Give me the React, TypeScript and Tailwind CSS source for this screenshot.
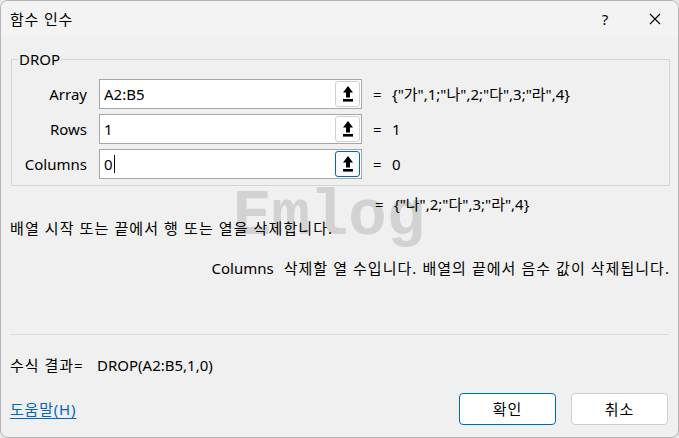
import React from "react";

const FONT = '"Noto Sans", "Noto Sans CJK KR", sans-serif';

function RefIcon() {
  return (
    <svg width="12" height="18" viewBox="0 0 12 18" aria-hidden="true">
      <polygon points="6,1 11,7.5 8,7.5 8,12.5 4,12.5 4,7.5 1,7.5" fill="#000" />
      <rect x="1" y="14" width="10" height="2.6" fill="#000" />
    </svg>
  );
}

type ArgRowProps = {
  label: string;
  value: string;
  result: string;
  focused?: boolean;
};

function ArgRow({ label, value, result, focused }: ArgRowProps) {
  return (
    <div className="flex h-[30px] items-center">
      <div className="w-[76px] text-right text-[15px] leading-[20px]">{label}</div>
      <div className="ml-[12px] flex h-[30px] w-[263px] items-center border border-[#a6a6a6] bg-white pl-[4px] pr-[1px]">
        <div className="flex flex-1 items-center text-[15px] leading-[20px]">
          {value}
          {focused && <span className="ml-[1px] inline-block h-[18px] w-[1px] bg-black" />}
        </div>
        <div
          className={
            focused
              ? "flex h-[26px] w-[25px] items-center justify-center rounded-[3px] border border-[#0067c0] bg-[#f7fbff]"
              : "flex h-[26px] w-[25px] items-center justify-center rounded-[3px] border border-[#d0d0d0] bg-white"
          }
        >
          <RefIcon />
        </div>
      </div>
      <div className="ml-[11px] w-[19px] text-[15px] leading-[20px]">=</div>
      <div className="text-[15px] leading-[20px]">{result}</div>
    </div>
  );
}

export default function App() {
  return (
    <div className="h-[438px] w-[679px] bg-[#e6e6e6]" style={{ fontFamily: FONT }}>
      <div className="relative isolate flex h-[438px] w-[679px] flex-col overflow-hidden rounded-[8px] border border-[#b4b4b4] bg-[#f0f0f0] text-[#000]">
        {/* watermark behind the dialog contents */}
        <div
          className="pointer-events-none absolute left-[232px] top-[178px] -z-10 text-[64px] font-bold leading-[76px] text-[#d2d2d2]"
          style={{ fontFamily: '"Liberation Mono", monospace' }}
        >
          Emlog
        </div>

        {/* title bar */}
        <div className="flex h-[36px] items-center bg-[#f3f3f3] pl-[9px]">
          <div className="flex-1 text-[15px] leading-[20px] tracking-[0.8px]">함수 인수</div>
          <div className="w-[30px] text-center text-[15px] leading-[20px]">?</div>
          <div className="ml-[28px] mr-[16px] flex h-[20px] w-[14px] items-center justify-center">
            <svg width="12" height="12" viewBox="0 0 12 12" aria-hidden="true">
              <path d="M1 1 L11 11 M11 1 L1 11" stroke="#000" strokeWidth="1.1" fill="none" />
            </svg>
          </div>
        </div>

        {/* argument group */}
        <fieldset className="mx-[10px] mt-[12px] w-[659px] border border-[#d6d6d6] px-[6px] pb-[6px] pt-[10px]">
          <legend className="px-[1px] text-[15px] leading-[20px]">DROP</legend>
          <div className="-ml-[7px] flex flex-col gap-[5px]">
            <ArgRow label="Array" value="A2:B5" result={'{"가",1;"나",2;"다",3;"라",4}'} />
            <ArgRow label="Rows" value="1" result="1" />
            <ArgRow label="Columns" value="0" result="0" focused />
          </div>
        </fieldset>

        {/* overall result */}
        <div className="mt-[8px] flex h-[20px] items-center pl-[374px] text-[15px] leading-[20px]">
          <span className="w-[19px]">=</span>
          <span>{'{"나",2;"다",3;"라",4}'}</span>
        </div>

        <div className="mt-[4px] pl-[9px] text-[15px] leading-[20px] tracking-[1.1px]">
          배열 시작 또는 끝에서 행 또는 열을 삭제합니다.
        </div>

        <div className="mt-[20px] flex justify-end pr-[8px] text-[15px] leading-[20px]">
          <span className="mr-[10px]">Columns</span>
          <span className="tracking-[1.05px]">삭제할 열 수입니다. 배열의 끝에서 음수 값이 삭제됩니다.</span>
        </div>

        <div className="mx-[9px] mt-[56px] h-px bg-[#dcdcdc]" />

        <div className="mt-[20px] flex h-[20px] items-center pl-[9px] text-[15px] leading-[20px]">
          <span className="w-[87px] tracking-[1px]">수식 결과=</span>
          <span>DROP(A2:B5,1,0)</span>
        </div>

        {/* footer */}
        <div className="mt-[18px] flex h-[32px] items-center pl-[9px] pr-[10px]">
          <span className="flex-1 text-[15px] leading-[20px] tracking-[0.8px] text-[#0067c0] underline underline-offset-[3px]">
            도움말(H)
          </span>
          <button className="flex h-[32px] w-[97px] items-center justify-center rounded-[4px] border border-[#0067c0] bg-white text-[15px] leading-[20px] tracking-[1px]">
            확인
          </button>
          <button className="ml-[15px] flex h-[32px] w-[97px] items-center justify-center rounded-[4px] border border-[#d0d0d0] bg-white text-[15px] leading-[20px] tracking-[1px]">
            취소
          </button>
        </div>
      </div>
    </div>
  );
}
